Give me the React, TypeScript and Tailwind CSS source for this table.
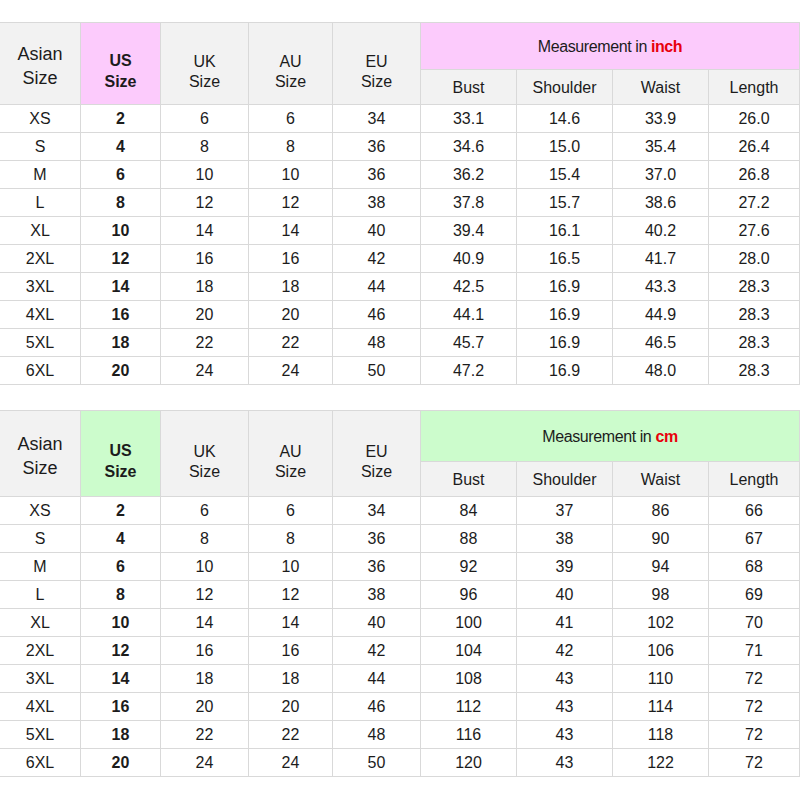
import React from "react";

type Row = [string, string, string, string, string, string, string, string, string];

const inchRows: Row[] = [
  ["XS", "2", "6", "6", "34", "33.1", "14.6", "33.9", "26.0"],
  ["S", "4", "8", "8", "36", "34.6", "15.0", "35.4", "26.4"],
  ["M", "6", "10", "10", "36", "36.2", "15.4", "37.0", "26.8"],
  ["L", "8", "12", "12", "38", "37.8", "15.7", "38.6", "27.2"],
  ["XL", "10", "14", "14", "40", "39.4", "16.1", "40.2", "27.6"],
  ["2XL", "12", "16", "16", "42", "40.9", "16.5", "41.7", "28.0"],
  ["3XL", "14", "18", "18", "44", "42.5", "16.9", "43.3", "28.3"],
  ["4XL", "16", "20", "20", "46", "44.1", "16.9", "44.9", "28.3"],
  ["5XL", "18", "22", "22", "48", "45.7", "16.9", "46.5", "28.3"],
  ["6XL", "20", "24", "24", "50", "47.2", "16.9", "48.0", "28.3"],
];

const cmRows: Row[] = [
  ["XS", "2", "6", "6", "34", "84", "37", "86", "66"],
  ["S", "4", "8", "8", "36", "88", "38", "90", "67"],
  ["M", "6", "10", "10", "36", "92", "39", "94", "68"],
  ["L", "8", "12", "12", "38", "96", "40", "98", "69"],
  ["XL", "10", "14", "14", "40", "100", "41", "102", "70"],
  ["2XL", "12", "16", "16", "42", "104", "42", "106", "71"],
  ["3XL", "14", "18", "18", "44", "108", "43", "110", "72"],
  ["4XL", "16", "20", "20", "46", "112", "43", "114", "72"],
  ["5XL", "18", "22", "22", "48", "116", "43", "118", "72"],
  ["6XL", "20", "24", "24", "50", "120", "43", "122", "72"],
];

const cell = "flex items-center justify-center border-r border-b border-[#d9d9d9] text-center";

function SizeTable({ rows, unit, accent, topH }: { rows: Row[]; unit: string; accent: string; topH: string }) {
  return (
    <div
      className={`grid grid-cols-[81px_80px_88px_84px_88px_96px_96px_96px_91px] border-t border-[#d9d9d9] text-[#1c1c1c] ${topH}`}
    >
      <div className={`${cell} row-span-2 bg-[#f2f2f2] flex-col text-[18px] leading-[24px] pt-[4px]`}>
        <span>Asian</span>
        <span>Size</span>
      </div>
      <div className={`${cell} row-span-2 ${accent} flex-col text-[16px] leading-[21px] font-bold pt-[14px]`}>
        <span>US</span>
        <span>Size</span>
      </div>
      <div className={`${cell} row-span-2 bg-[#f2f2f2] flex-col text-[16px] leading-[20px] pt-[16px]`}>
        <span>UK</span>
        <span>Size</span>
      </div>
      <div className={`${cell} row-span-2 bg-[#f2f2f2] flex-col text-[16px] leading-[20px] pt-[16px]`}>
        <span>AU</span>
        <span>Size</span>
      </div>
      <div className={`${cell} row-span-2 bg-[#f2f2f2] flex-col text-[16px] leading-[20px] pt-[16px]`}>
        <span>EU</span>
        <span>Size</span>
      </div>
      <div className={`${cell} col-span-4 ${accent} text-[16px] tracking-[-0.4px] pt-[2px]`}>
        Measurement in&nbsp;<span className="font-bold text-[#e8000b]">{unit}</span>
      </div>
      {["Bust", "Shoulder", "Waist", "Length"].map((h) => (
        <div key={h} className={`${cell} bg-[#f2f2f2] text-[16px] pt-[2px]`}>
          {h}
        </div>
      ))}
      {rows.map((r) =>
        r.map((v, i) => (
          <div key={r[0] + i} className={`${cell} h-[28px] text-[16px] ${i === 1 ? "font-bold" : ""}`}>
            {v}
          </div>
        ))
      )}
    </div>
  );
}

export default function App() {
  return (
    <div className="w-[800px] h-[800px] bg-white pt-[22px] font-['Liberation_Sans',Arial,sans-serif] overflow-hidden">
      <SizeTable rows={inchRows} unit="inch" accent="bg-[#fccbfc]" topH="grid-rows-[47px_35px]" />
      <div className="h-[25px]" />
      <SizeTable rows={cmRows} unit="cm" accent="bg-[#ccfccc]" topH="grid-rows-[51px_35px]" />
    </div>
  );
}
